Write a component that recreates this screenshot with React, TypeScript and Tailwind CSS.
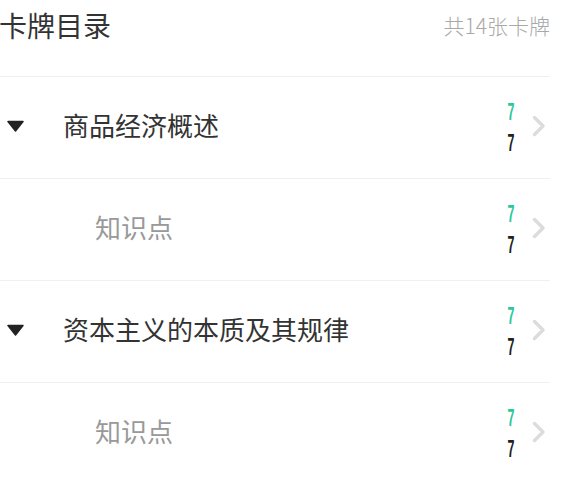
import React from 'react';

interface Row {
  title: string;
  level: number;
  done: number;
  total: number;
}

const rows: Row[] = [
  { title: '商品经济概述', level: 0, done: 7, total: 7 },
  { title: '知识点', level: 1, done: 7, total: 7 },
  { title: '资本主义的本质及其规律', level: 0, done: 7, total: 7 },
  { title: '知识点', level: 1, done: 7, total: 7 },
];

const Chevron = () => (
  <svg width="14" height="22" viewBox="0 0 14 22" fill="none">
    <path d="M2.5 2.5 L11 11 L2.5 19.5" stroke="#dcdcdc" strokeWidth="3.5" strokeLinecap="round" strokeLinejoin="round" />
  </svg>
);

const Triangle = () => (
  <svg width="17" height="12" viewBox="0 0 17 12">
    <path d="M1 1.5 L16 1.5 L8.5 11 Z" fill="#222" stroke="#222" strokeWidth="1.5" strokeLinejoin="round" />
  </svg>
);

const App: React.FC = () => {
  return (
    <div className="w-[581px] h-[478px] overflow-hidden bg-white font-['Noto_Sans_CJK_SC','Noto_Sans',sans-serif]">
      <div className="w-[550px]">
        <div className="flex items-center justify-between h-[50px]">
          <h1 className="text-[28px] leading-none text-[#333] -ml-[1px]">卡牌目录</h1>
          <span className="text-[21px] leading-none font-light text-[#a8a8a8]">共14张卡牌</span>
        </div>

        <div className="mt-[26px]">
          {rows.map((row, i) => (
            <div key={i} className="flex items-center h-[102px] border-t border-[#f0f0f0]">
              {row.level === 0 ? (
                <div className="w-[63px] pl-[7px] flex items-center -mt-[3px]">
                  <Triangle />
                </div>
              ) : (
                <div className="w-[95px]" />
              )}
              <div
                className={
                  row.level === 0
                    ? 'flex-1 text-[26px] leading-none text-[#333] -mt-[5px]'
                    : 'flex-1 text-[26px] leading-none text-[#999] -mt-[5px]'
                }
              >
                {row.title}
              </div>
              <div className="flex flex-col items-center w-[10px] font-['Liberation_Sans',sans-serif] font-bold text-[24px] leading-[31px] -mt-[1px] scale-x-[0.52]">
                <span className="text-[#2bc69e]">{row.done}</span>
                <span className="text-[#222]">{row.total}</span>
              </div>
              <div className="ml-[16px] mr-[4px] flex items-center -mt-[4px]">
                <Chevron />
              </div>
            </div>
          ))}
        </div>
      </div>
    </div>
  );
};

export default App;
